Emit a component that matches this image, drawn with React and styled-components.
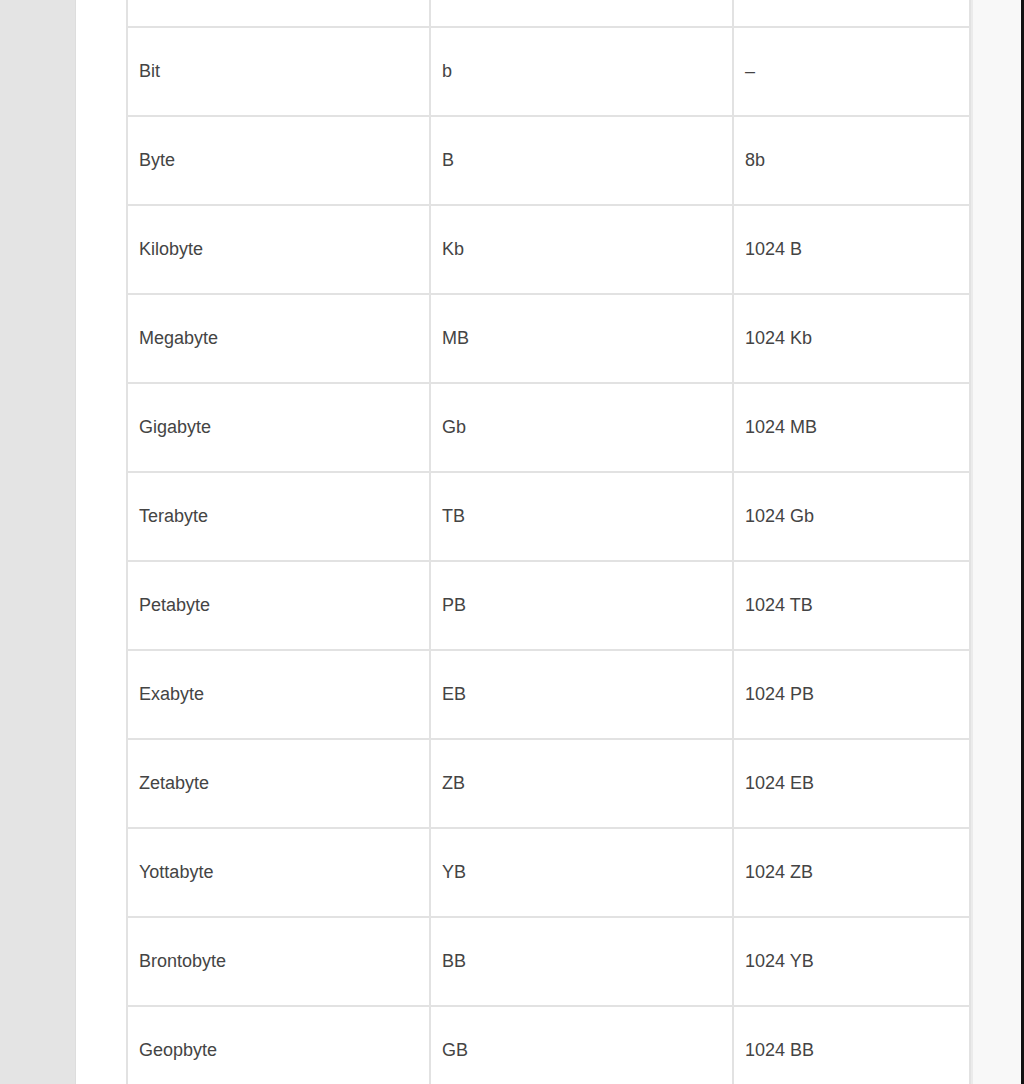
import React from "react";
import styled, { createGlobalStyle } from "styled-components";

const GlobalStyle = createGlobalStyle`
  html, body {
    margin: 0;
    padding: 0;
    background: #ffffff;
  }
  body {
    font-family: "Liberation Sans", Arial, sans-serif;
    overflow: hidden;
  }
`;

const Screen = styled.div`
  display: flex;
  width: 1024px;
  height: 1084px;
  overflow: hidden;
`;

const SideRail = styled.div`
  flex: 0 0 75px;
  background: #e4e4e4;
  border-right: 1px solid #dddddd;
`;

const Page = styled.main`
  flex: 0 0 895px;
  background: #ffffff;
  padding-left: 50px;
  box-sizing: border-box;
`;

const Gutter = styled.div`
  flex: 0 0 48px;
  background: #f8f8f8;
  border-left: 2px solid #ebebeb;
`;

const EdgeLine = styled.div`
  flex: 0 0 3px;
  background: #111111;
`;

const UnitTable = styled.table`
  width: 845px;
  table-layout: fixed;
  border-collapse: separate;
  border-spacing: 0;
  border-left: 2px solid #e2e2e2;
  color: #444444;
  font-size: 18px;
`;

const Cell = styled.td`
  height: ${(p) => (p.$stub ? "26px" : "87px")};
  padding: 0 11px;
  border-right: 2px solid #e2e2e2;
  border-bottom: 2px solid #e2e2e2;
  vertical-align: middle;
  white-space: nowrap;
`;

const units = [
  ["Bit", "b", "–"],
  ["Byte", "B", "8b"],
  ["Kilobyte", "Kb", "1024 B"],
  ["Megabyte", "MB", "1024 Kb"],
  ["Gigabyte", "Gb", "1024 MB"],
  ["Terabyte", "TB", "1024 Gb"],
  ["Petabyte", "PB", "1024 TB"],
  ["Exabyte", "EB", "1024 PB"],
  ["Zetabyte", "ZB", "1024 EB"],
  ["Yottabyte", "YB", "1024 ZB"],
  ["Brontobyte", "BB", "1024 YB"],
  ["Geopbyte", "GB", "1024 BB"],
];

function App() {
  return (
    <>
      <GlobalStyle />
      <Screen>
        <SideRail />
        <Page>
          <UnitTable>
            <colgroup>
              <col style={{ width: 303 }} />
              <col style={{ width: 303 }} />
              <col style={{ width: 237 }} />
            </colgroup>
            <tbody>
              <tr>
                <Cell $stub />
                <Cell $stub />
                <Cell $stub />
              </tr>
              {units.map(([name, symbol, value]) => (
                <tr key={name}>
                  <Cell>{name}</Cell>
                  <Cell>{symbol}</Cell>
                  <Cell>{value}</Cell>
                </tr>
              ))}
            </tbody>
          </UnitTable>
        </Page>
        <Gutter />
        <EdgeLine />
      </Screen>
    </>
  );
}

export default App;
